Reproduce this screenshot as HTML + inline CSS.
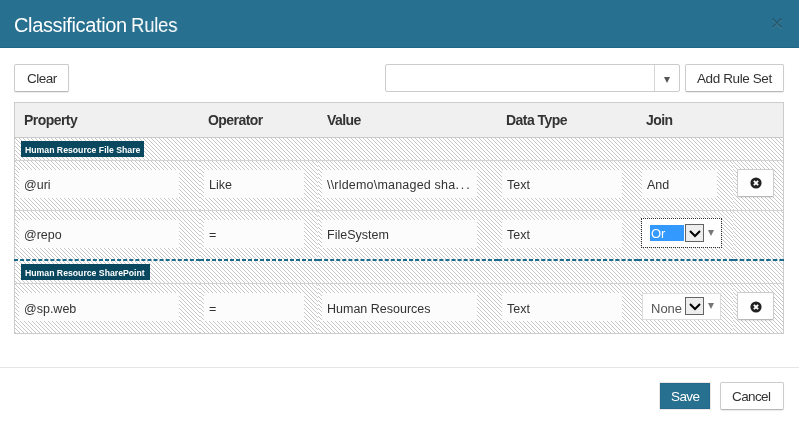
<!DOCTYPE html>
<html><head><meta charset="utf-8">
<style>
html,body{margin:0;padding:0;width:799px;height:425px;overflow:hidden;background:#fff;}
body{font-family:"Liberation Sans",sans-serif;position:relative;color:#333;}
.a{position:absolute;box-sizing:border-box;}
.t{position:absolute;white-space:nowrap;line-height:15px;will-change:transform;}
#hdr{left:0;top:0;width:799px;height:48px;background:#27708f;border-bottom:1px solid #1f6686;}
#title{left:14px;top:13px;font-size:20px;letter-spacing:-0.36px;line-height:24px;color:#fff;}
#title2{left:131px;top:13px;font-size:20px;letter-spacing:-0.3px;line-height:24px;color:#fff;transform:scaleX(0.93);transform-origin:0 0;}
#close{left:770px;top:12px;width:14px;height:20px;font-size:21px;line-height:20px;font-weight:bold;color:#000;opacity:.2;text-shadow:0 1px 0 #fff;text-align:center;}
.btn{background:#fff;border:1px solid #ccc;border-bottom-color:#b8b8b8;border-radius:2px;box-shadow:0 1px 1px rgba(0,0,0,.08);}
.bt{font-size:13.5px;color:#333;}
#sel{left:385px;top:64px;width:295px;height:28px;border:1px solid #ccc;border-radius:2px;background:#fff;}
#seldiv{left:654px;top:65px;width:1px;height:26px;background:#d5d5d5;}
#seltri{left:664px;top:77px;width:0;height:0;border-left:3.5px solid transparent;border-right:3.5px solid transparent;border-top:6px solid #555;}
#tbl{left:14px;top:102px;width:770px;height:232px;border:1px solid #ccc;background:#fff;}
#thead{left:15px;top:103px;width:768px;height:35px;background:#f0f0f0;border-bottom:1px solid #cacaca;}
.th{font-weight:bold;font-size:14px;letter-spacing:-0.55px;color:#333;top:113px;}
.inp{background:#fcfcfc;height:28px;}
.it{font-size:12.5px;color:#333;}
.lbl{background:#0a485f;height:16px;}
.lt{color:#fff;font-weight:bold;font-size:8.7px;}
.sep{left:15px;width:768px;height:1px;background:#d2d2d2;}
#footer{left:0;top:367px;width:799px;height:1px;background:#e5e5e5;}
#save{left:659px;top:382px;width:52px;height:28px;border:1px solid #ece6e6;}
#savein{left:660px;top:383px;width:50px;height:26px;background:#27708f;border:1px solid #226b8a;}
.delbtn{width:37px;height:28px;}
.xic{position:absolute;left:12px;top:7px;}
.jsel{background:#fff;border:1px solid #ddd;}
.dd{width:19px;height:18px;background:#eee;border:1px solid #636363;}
.dd svg{position:absolute;left:2px;top:4px;}
.tri{width:0;height:0;border-left:3.5px solid transparent;border-right:3.5px solid transparent;border-top:6px solid #777;}
</style></head><body>
<div class="a" id="hdr"></div>
<div class="t" id="title">Classification</div><div class="t" id="title2">Rules</div>
<svg class="a" style="left:770px;top:16px" width="14" height="14"><path d="M2.5 3.5L11.5 12.5M11.5 3.5L2.5 12.5" stroke="rgba(255,255,255,.12)" stroke-width="1.6"/><path d="M2.5 2.5L11.5 11.5M11.5 2.5L2.5 11.5" stroke="rgba(0,0,0,.26)" stroke-width="1.6"/></svg>

<div class="a btn" style="left:14px;top:64px;width:55px;height:28px;"></div>
<div class="t bt" style="left:27px;top:71px;letter-spacing:-0.5px;">Clear</div>
<div class="a" id="sel"></div>
<div class="a" id="seldiv"></div>
<div class="a" id="seltri"></div>
<div class="a btn" style="left:685px;top:64px;width:99px;height:28px;"></div>
<div class="t bt" style="left:697px;top:71px;letter-spacing:-0.4px;">Add Rule Set</div>

<div class="a" id="tbl"></div>
<div class="a" id="thead"></div>
<div class="t th" style="left:24px">Property</div>
<div class="t th" style="left:208px">Operator</div>
<div class="t th" style="left:327px">Value</div>
<div class="t th" style="left:506px">Data Type</div>
<div class="t th" style="left:646px">Join</div>

<svg class="a" style="left:0;top:0" width="799" height="425" shape-rendering="crispEdges">
<defs>
<pattern id="p0" x="15" y="138" width="4" height="4" patternUnits="userSpaceOnUse"><path d="M0 0h1v1h-1zM1 1h1v1h-1zM2 2h1v1h-1zM3 3h1v1h-1z" fill="#c8c8c8"/></pattern>
<pattern id="p1" x="15" y="261" width="4" height="4" patternUnits="userSpaceOnUse"><path d="M0 0h1v1h-1zM1 1h1v1h-1zM2 2h1v1h-1zM3 3h1v1h-1z" fill="#c8c8c8"/></pattern>
<pattern id="p2" x="15" y="161" width="4" height="4" patternUnits="userSpaceOnUse"><path d="M0 0h1v1h-1zM1 1h1v1h-1zM2 2h1v1h-1zM3 3h1v1h-1z" fill="#c8c8c8"/></pattern>
<pattern id="p3" x="200" y="161" width="4" height="4" patternUnits="userSpaceOnUse"><path d="M0 0h1v1h-1zM1 1h1v1h-1zM2 2h1v1h-1zM3 3h1v1h-1z" fill="#c8c8c8"/></pattern>
<pattern id="p4" x="318" y="161" width="4" height="4" patternUnits="userSpaceOnUse"><path d="M0 0h1v1h-1zM1 1h1v1h-1zM2 2h1v1h-1zM3 3h1v1h-1z" fill="#c8c8c8"/></pattern>
<pattern id="p5" x="498" y="161" width="4" height="4" patternUnits="userSpaceOnUse"><path d="M0 0h1v1h-1zM1 1h1v1h-1zM2 2h1v1h-1zM3 3h1v1h-1z" fill="#c8c8c8"/></pattern>
<pattern id="p6" x="638" y="161" width="4" height="4" patternUnits="userSpaceOnUse"><path d="M0 0h1v1h-1zM1 1h1v1h-1zM2 2h1v1h-1zM3 3h1v1h-1z" fill="#c8c8c8"/></pattern>
<pattern id="p7" x="733" y="161" width="4" height="4" patternUnits="userSpaceOnUse"><path d="M0 0h1v1h-1zM1 1h1v1h-1zM2 2h1v1h-1zM3 3h1v1h-1z" fill="#c8c8c8"/></pattern>
<pattern id="p8" x="15" y="211" width="4" height="4" patternUnits="userSpaceOnUse"><path d="M0 0h1v1h-1zM1 1h1v1h-1zM2 2h1v1h-1zM3 3h1v1h-1z" fill="#c8c8c8"/></pattern>
<pattern id="p9" x="200" y="211" width="4" height="4" patternUnits="userSpaceOnUse"><path d="M0 0h1v1h-1zM1 1h1v1h-1zM2 2h1v1h-1zM3 3h1v1h-1z" fill="#c8c8c8"/></pattern>
<pattern id="p10" x="318" y="211" width="4" height="4" patternUnits="userSpaceOnUse"><path d="M0 0h1v1h-1zM1 1h1v1h-1zM2 2h1v1h-1zM3 3h1v1h-1z" fill="#c8c8c8"/></pattern>
<pattern id="p11" x="498" y="211" width="4" height="4" patternUnits="userSpaceOnUse"><path d="M0 0h1v1h-1zM1 1h1v1h-1zM2 2h1v1h-1zM3 3h1v1h-1z" fill="#c8c8c8"/></pattern>
<pattern id="p12" x="638" y="211" width="4" height="4" patternUnits="userSpaceOnUse"><path d="M0 0h1v1h-1zM1 1h1v1h-1zM2 2h1v1h-1zM3 3h1v1h-1z" fill="#c8c8c8"/></pattern>
<pattern id="p13" x="733" y="211" width="4" height="4" patternUnits="userSpaceOnUse"><path d="M0 0h1v1h-1zM1 1h1v1h-1zM2 2h1v1h-1zM3 3h1v1h-1z" fill="#c8c8c8"/></pattern>
<pattern id="p14" x="15" y="284" width="4" height="4" patternUnits="userSpaceOnUse"><path d="M0 0h1v1h-1zM1 1h1v1h-1zM2 2h1v1h-1zM3 3h1v1h-1z" fill="#c8c8c8"/></pattern>
<pattern id="p15" x="200" y="284" width="4" height="4" patternUnits="userSpaceOnUse"><path d="M0 0h1v1h-1zM1 1h1v1h-1zM2 2h1v1h-1zM3 3h1v1h-1z" fill="#c8c8c8"/></pattern>
<pattern id="p16" x="318" y="284" width="4" height="4" patternUnits="userSpaceOnUse"><path d="M0 0h1v1h-1zM1 1h1v1h-1zM2 2h1v1h-1zM3 3h1v1h-1z" fill="#c8c8c8"/></pattern>
<pattern id="p17" x="498" y="284" width="4" height="4" patternUnits="userSpaceOnUse"><path d="M0 0h1v1h-1zM1 1h1v1h-1zM2 2h1v1h-1zM3 3h1v1h-1z" fill="#c8c8c8"/></pattern>
<pattern id="p18" x="638" y="284" width="4" height="4" patternUnits="userSpaceOnUse"><path d="M0 0h1v1h-1zM1 1h1v1h-1zM2 2h1v1h-1zM3 3h1v1h-1z" fill="#c8c8c8"/></pattern>
<pattern id="p19" x="733" y="284" width="4" height="4" patternUnits="userSpaceOnUse"><path d="M0 0h1v1h-1zM1 1h1v1h-1zM2 2h1v1h-1zM3 3h1v1h-1z" fill="#c8c8c8"/></pattern>
</defs>
<rect x="15" y="138" width="768" height="22" fill="url(#p0)"/>
<rect x="15" y="261" width="768" height="22" fill="url(#p1)"/>
<rect x="15" y="161" width="185" height="49" fill="url(#p2)"/>
<rect x="200" y="161" width="118" height="49" fill="url(#p3)"/>
<rect x="318" y="161" width="180" height="49" fill="url(#p4)"/>
<rect x="498" y="161" width="140" height="49" fill="url(#p5)"/>
<rect x="638" y="161" width="95" height="49" fill="url(#p6)"/>
<rect x="733" y="161" width="50" height="49" fill="url(#p7)"/>
<rect x="15" y="211" width="185" height="48" fill="url(#p8)"/>
<rect x="200" y="211" width="118" height="48" fill="url(#p9)"/>
<rect x="318" y="211" width="180" height="48" fill="url(#p10)"/>
<rect x="498" y="211" width="140" height="48" fill="url(#p11)"/>
<rect x="638" y="211" width="95" height="48" fill="url(#p12)"/>
<rect x="733" y="211" width="50" height="48" fill="url(#p13)"/>
<rect x="15" y="284" width="185" height="49" fill="url(#p14)"/>
<rect x="200" y="284" width="118" height="49" fill="url(#p15)"/>
<rect x="318" y="284" width="180" height="49" fill="url(#p16)"/>
<rect x="498" y="284" width="140" height="49" fill="url(#p17)"/>
<rect x="638" y="284" width="95" height="49" fill="url(#p18)"/>
<rect x="733" y="284" width="50" height="49" fill="url(#p19)"/>
</svg>

<div class="a sep" style="top:160px"></div>
<div class="a sep" style="top:210px"></div>
<div class="a sep" style="top:283px"></div>

<div class="a lbl" style="left:21px;top:141px;width:123px;"></div>
<div class="t lt" style="left:25px;top:143px;">Human Resource File Share</div>
<div class="a lbl" style="left:21px;top:264px;width:129px;"></div>
<div class="t lt" style="left:25px;top:266px;">Human Resource SharePoint</div>

<!-- row 1 -->
<div class="a inp" style="left:19px;top:170px;width:160px;"></div>
<div class="a inp" style="left:204px;top:170px;width:100px;"></div>
<div class="a inp" style="left:322px;top:170px;width:155px;"></div>
<div class="a inp" style="left:502px;top:170px;width:120px;"></div>
<div class="a inp" style="left:642px;top:170px;width:75px;"></div>
<div class="t it" style="left:24px;top:178px;">@uri</div>
<div class="t it" style="left:209px;top:178px;">Like</div>
<div class="t it" style="left:327px;top:178px;"><span style="letter-spacing:0.2px">\\rldemo\managed sha</span><span style="letter-spacing:2px">...</span></div>
<div class="t it" style="left:507px;top:178px;">Text</div>
<div class="t it" style="left:647px;top:178px;">And</div>
<div class="a btn delbtn" style="left:737px;top:169px;"><svg class="xic" width="12" height="12" viewBox="0 0 12 12"><circle cx="6" cy="6" r="5.6" fill="#222"/><path d="M3.9 3.9L8.1 8.1M8.1 3.9L3.9 8.1" stroke="#fff" stroke-width="2"/></svg></div>

<!-- row 2 -->
<div class="a inp" style="left:19px;top:220px;width:160px;"></div>
<div class="a inp" style="left:204px;top:220px;width:100px;"></div>
<div class="a inp" style="left:322px;top:220px;width:155px;"></div>
<div class="a inp" style="left:502px;top:220px;width:120px;"></div>
<div class="t it" style="left:24px;top:228px;">@repo</div>
<div class="t it" style="left:209px;top:228px;">=</div>
<div class="t it" style="left:327px;top:228px;">FileSystem</div>
<div class="t it" style="left:507px;top:228px;">Text</div>
<div class="a jsel" style="left:642px;top:219px;width:79px;height:28px;border-color:#fff;outline:1px dotted #333;"></div>
<div class="a" style="left:650px;top:225px;width:34px;height:16px;background:#3399ff;"></div>
<div class="t it" style="left:651px;top:226px;color:#fff;font-size:13px;">Or</div>
<div class="a dd" style="left:685px;top:224px;"><svg width="14" height="9"><path d="M2 2L7 7L12 2" stroke="#000" stroke-width="2" fill="none"/></svg></div>
<div class="a tri" style="left:708px;top:230px;"></div>

<svg class="a" style="left:0;top:0" width="799" height="425"><path d="M14.000 259h4.065v2h-4.065zM20.065 259h4.065v2h-4.065zM26.129 259h4.065v2h-4.065zM32.194 259h4.065v2h-4.065zM38.258 259h4.065v2h-4.065zM44.323 259h4.065v2h-4.065zM50.387 259h4.065v2h-4.065zM56.452 259h4.065v2h-4.065zM62.516 259h4.065v2h-4.065zM68.581 259h4.065v2h-4.065zM74.645 259h4.065v2h-4.065zM80.710 259h4.065v2h-4.065zM86.774 259h4.065v2h-4.065zM92.839 259h4.065v2h-4.065zM98.903 259h4.065v2h-4.065zM104.968 259h4.065v2h-4.065zM111.032 259h4.065v2h-4.065zM117.097 259h4.065v2h-4.065zM123.161 259h4.065v2h-4.065zM129.226 259h4.065v2h-4.065zM135.290 259h4.065v2h-4.065zM141.355 259h4.065v2h-4.065zM147.419 259h4.065v2h-4.065zM153.484 259h4.065v2h-4.065zM159.548 259h4.065v2h-4.065zM165.613 259h4.065v2h-4.065zM171.677 259h4.065v2h-4.065zM177.742 259h4.065v2h-4.065zM183.806 259h4.065v2h-4.065zM189.871 259h4.065v2h-4.065zM195.935 259h4.065v2h-4.065zM200.000 259h4.000v2h-4.000zM206.000 259h4.000v2h-4.000zM212.000 259h4.000v2h-4.000zM218.000 259h4.000v2h-4.000zM224.000 259h4.000v2h-4.000zM230.000 259h4.000v2h-4.000zM236.000 259h4.000v2h-4.000zM242.000 259h4.000v2h-4.000zM248.000 259h4.000v2h-4.000zM254.000 259h4.000v2h-4.000zM260.000 259h4.000v2h-4.000zM266.000 259h4.000v2h-4.000zM272.000 259h4.000v2h-4.000zM278.000 259h4.000v2h-4.000zM284.000 259h4.000v2h-4.000zM290.000 259h4.000v2h-4.000zM296.000 259h4.000v2h-4.000zM302.000 259h4.000v2h-4.000zM308.000 259h4.000v2h-4.000zM314.000 259h4.000v2h-4.000zM318.000 259h4.067v2h-4.067zM324.067 259h4.067v2h-4.067zM330.133 259h4.067v2h-4.067zM336.200 259h4.067v2h-4.067zM342.267 259h4.067v2h-4.067zM348.333 259h4.067v2h-4.067zM354.400 259h4.067v2h-4.067zM360.467 259h4.067v2h-4.067zM366.533 259h4.067v2h-4.067zM372.600 259h4.067v2h-4.067zM378.667 259h4.067v2h-4.067zM384.733 259h4.067v2h-4.067zM390.800 259h4.067v2h-4.067zM396.867 259h4.067v2h-4.067zM402.933 259h4.067v2h-4.067zM409.000 259h4.067v2h-4.067zM415.067 259h4.067v2h-4.067zM421.133 259h4.067v2h-4.067zM427.200 259h4.067v2h-4.067zM433.267 259h4.067v2h-4.067zM439.333 259h4.067v2h-4.067zM445.400 259h4.067v2h-4.067zM451.467 259h4.067v2h-4.067zM457.533 259h4.067v2h-4.067zM463.600 259h4.067v2h-4.067zM469.667 259h4.067v2h-4.067zM475.733 259h4.067v2h-4.067zM481.800 259h4.067v2h-4.067zM487.867 259h4.067v2h-4.067zM493.933 259h4.067v2h-4.067zM498.000 259h4.174v2h-4.174zM504.174 259h4.174v2h-4.174zM510.348 259h4.174v2h-4.174zM516.522 259h4.174v2h-4.174zM522.696 259h4.174v2h-4.174zM528.870 259h4.174v2h-4.174zM535.043 259h4.174v2h-4.174zM541.217 259h4.174v2h-4.174zM547.391 259h4.174v2h-4.174zM553.565 259h4.174v2h-4.174zM559.739 259h4.174v2h-4.174zM565.913 259h4.174v2h-4.174zM572.087 259h4.174v2h-4.174zM578.261 259h4.174v2h-4.174zM584.435 259h4.174v2h-4.174zM590.609 259h4.174v2h-4.174zM596.783 259h4.174v2h-4.174zM602.957 259h4.174v2h-4.174zM609.130 259h4.174v2h-4.174zM615.304 259h4.174v2h-4.174zM621.478 259h4.174v2h-4.174zM627.652 259h4.174v2h-4.174zM633.826 259h4.174v2h-4.174zM638.000 259h4.062v2h-4.062zM644.062 259h4.062v2h-4.062zM650.125 259h4.062v2h-4.062zM656.188 259h4.062v2h-4.062zM662.250 259h4.062v2h-4.062zM668.312 259h4.062v2h-4.062zM674.375 259h4.062v2h-4.062zM680.438 259h4.062v2h-4.062zM686.500 259h4.062v2h-4.062zM692.562 259h4.062v2h-4.062zM698.625 259h4.062v2h-4.062zM704.688 259h4.062v2h-4.062zM710.750 259h4.062v2h-4.062zM716.812 259h4.062v2h-4.062zM722.875 259h4.062v2h-4.062zM728.938 259h4.062v2h-4.062zM733.000 259h4.625v2h-4.625zM739.625 259h4.625v2h-4.625zM746.250 259h4.625v2h-4.625zM752.875 259h4.625v2h-4.625zM759.500 259h4.625v2h-4.625zM766.125 259h4.625v2h-4.625zM772.750 259h4.625v2h-4.625zM779.375 259h4.625v2h-4.625z" fill="#1b6a8b"/></svg>

<!-- row 3 -->
<div class="a inp" style="left:19px;top:293px;width:160px;"></div>
<div class="a inp" style="left:204px;top:293px;width:100px;"></div>
<div class="a inp" style="left:322px;top:293px;width:155px;"></div>
<div class="a inp" style="left:502px;top:293px;width:120px;"></div>
<div class="t it" style="left:24px;top:302px;">@sp.web</div>
<div class="t it" style="left:209px;top:302px;">=</div>
<div class="t it" style="left:327px;top:302px;">Human Resources</div>
<div class="t it" style="left:507px;top:302px;">Text</div>
<div class="a jsel" style="left:642px;top:293px;width:79px;height:27px;"></div>
<div class="t it" style="left:651px;top:301px;color:#555;font-size:13px;">None</div>
<div class="a dd" style="left:685px;top:297px;"><svg width="14" height="9"><path d="M2 2L7 7L12 2" stroke="#000" stroke-width="2" fill="none"/></svg></div>
<div class="a tri" style="left:708px;top:303px;"></div>
<div class="a btn delbtn" style="left:737px;top:292px;"><svg class="xic" style="top:8px" width="12" height="12" viewBox="0 0 12 12"><circle cx="6" cy="6" r="5.6" fill="#222"/><path d="M3.9 3.9L8.1 8.1M8.1 3.9L3.9 8.1" stroke="#fff" stroke-width="2"/></svg></div>

<div class="a" id="footer"></div>
<div class="a" id="save"></div><div class="a" id="savein"></div>
<div class="t bt" style="left:671px;top:389px;color:#fff;letter-spacing:-0.6px;">Save</div>
<div class="a btn" style="left:720px;top:382px;width:64px;height:28px;"></div>
<div class="t bt" style="left:732px;top:389px;letter-spacing:-0.6px;">Cancel</div>
</body></html>
